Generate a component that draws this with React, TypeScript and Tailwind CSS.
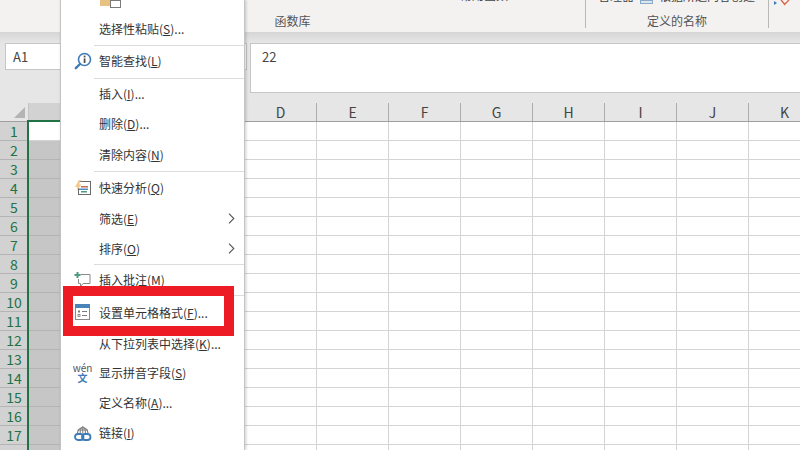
const columns = ['A', 'B', 'C', 'D', 'E', 'F', 'G', 'H', 'I', 'J', 'K'];
const rows = Array.from({ length: 18 }, (_, i) => i + 1);

function SearchIcon() {
  return (
    <svg width="18" height="18" viewBox="0 0 18 18" fill="none">
      <circle cx="10.5" cy="7.5" r="6" stroke="#3f7cb6" strokeWidth="1.6" fill="#fff" />
      <path d="M6 12 L1.8 16.2" stroke="#3f7cb6" strokeWidth="2.4" strokeLinecap="round" />
      <rect x="9.7" y="3.6" width="1.8" height="1.8" fill="#505050" />
      <rect x="9.7" y="6.4" width="1.8" height="4.6" fill="#505050" />
    </svg>
  );
}

function QuickIcon() {
  return (
    <svg width="18" height="18" viewBox="0 0 18 18" fill="none">
      <rect x="4.5" y="2.5" width="12" height="13" fill="#fff" stroke="#6a6a6a" />
      <path d="M5 1 L1 8 H3.5 L2.5 12 L7.5 5.5 H5 L7 1 Z" fill="#f2c98a" />
      <rect x="7" y="7" width="7" height="1.5" fill="#c9694f" />
      <rect x="5" y="9.5" width="9" height="1.5" fill="#4b8fc4" />
      <rect x="7" y="12" width="6" height="1.5" fill="#4f9a84" />
    </svg>
  );
}

function CommentIcon() {
  return (
    <svg width="18" height="18" viewBox="0 0 18 18" fill="none">
      <path d="M6.5 3.5 H16 V12.5 H9 L6.5 15.5 V12.5 H4.5 V8" stroke="#8a8a8a" strokeWidth="1" />
      <path d="M3.5 1 V7 M0.5 4 H6.5" stroke="#4f9a84" strokeWidth="2" />
    </svg>
  );
}

function FormatIcon() {
  return (
    <svg width="16" height="17" viewBox="0 0 16 17" fill="none">
      <rect x="0.5" y="0.5" width="14" height="15" fill="#fff" stroke="#8a8a8a" />
      <rect x="0" y="0" width="15" height="4" fill="#4a83b8" />
      <rect x="3" y="6.5" width="2" height="2" fill="#7b7b7b" />
      <rect x="7" y="7" width="5" height="1" fill="#7b7b7b" />
      <rect x="3" y="10.5" width="2" height="2" fill="none" stroke="#7b7b7b" strokeWidth="0.8" />
      <rect x="7" y="11" width="5" height="1" fill="#7b7b7b" />
    </svg>
  );
}

function LinkIcon() {
  return (
    <svg width="18" height="18" viewBox="0 0 18 18" fill="none">
      <path d="M3.5 9 A5.3 6.3 0 0 1 14 9" stroke="#7b7b7b" strokeWidth="1.2" />
      <path d="M3.5 6 H14 M8.8 2.5 V9 M6.2 9 C6 6 7 4 8.8 2.7 C10.6 4 11.6 6 11.4 9" stroke="#7b7b7b" strokeWidth="1" />
      <rect x="1" y="10" width="8.5" height="6" rx="3" stroke="#3f7cb6" strokeWidth="1.8" fill="#fff" />
      <rect x="8" y="10" width="8.5" height="6" rx="3" stroke="#3f7cb6" strokeWidth="1.8" />
    </svg>
  );
}

function Chevron() {
  return (
    <svg width="7" height="11" viewBox="0 0 7 11" fill="none" className="ml-auto mr-[9px]">
      <path d="M1 0.7 L5.8 5.5 L1 10.3" stroke="#555" strokeWidth="1.1" />
    </svg>
  );
}

function Item({
  label,
  hotkey,
  dots,
  height,
  icon,
  arrow,
}: {
  label: string;
  hotkey: string;
  dots?: boolean;
  height: string;
  icon?: React.ReactNode;
  arrow?: boolean;
}) {
  return (
    <div className={`flex items-center text-[12px] leading-none text-[#333] ${height}`}>
      <div className="flex w-[38px] shrink-0 items-center justify-center pl-[5px]">{icon}</div>
      <span className="whitespace-nowrap">
        {label}(<u>{hotkey}</u>){dots ? '...' : ''}
      </span>
      {arrow && <Chevron />}
    </div>
  );
}

function Separator() {
  return <div className="ml-[33px] h-px bg-[#dcdcdc]" />;
}

function ContextMenu() {
  return (
    <div className="absolute left-[60px] top-0 h-[450px] w-[185px] border-x border-[#c4c4c4] bg-white shadow-[1px_0_3px_rgba(0,0,0,0.2)]">
      <div className="flex h-[13px] items-start pl-[39px]">
        <div className="h-[6px] w-[10px] bg-[#e8c283]" />
        <div className="h-[8px] w-[11px] border border-[#7b7b7b] bg-white" />
      </div>
      <Item label="选择性粘贴" hotkey="S" dots height="h-[31px]" />
      <div className="h-px" />
      <Separator />
      <Item label="智能查找" hotkey="L" height="h-[30px]" icon={<SearchIcon />} />
      <div className="h-[2px]" />
      <Separator />
      <Item label="插入" hotkey="I" dots height="h-[30px]" />
      <Item label="删除" hotkey="D" dots height="h-[30px]" />
      <Item label="清除内容" hotkey="N" height="h-[32px]" />
      <Separator />
      <Item label="快速分析" hotkey="Q" height="h-[32px]" icon={<QuickIcon />} />
      <Item label="筛选" hotkey="E" height="h-[29px]" arrow />
      <Item label="排序" hotkey="O" height="h-[31px]" arrow />
      <Separator />
      <Item label="插入批注" hotkey="M" height="h-[30px]" icon={<CommentIcon />} />
      <Separator />
      <Item label="设置单元格格式" hotkey="F" dots height="h-[33px]" icon={<FormatIcon />} />
      <Item label="从下拉列表中选择" hotkey="K" dots height="h-[29px]" />
      <Item
        label="显示拼音字段"
        hotkey="S"
        height="h-[30px]"
        icon={
          <div className="flex flex-col items-center leading-none">
            <span className="text-[10px] leading-[10px] text-[#555]">wén</span>
            <span className="text-[10px] font-bold leading-[10px] text-[#3f7cb6]">文</span>
          </div>
        }
      />
      <Item label="定义名称" hotkey="A" dots height="h-[30px]" />
      <Item label="链接" hotkey="I" height="h-[30px]" icon={<LinkIcon />} />
    </div>
  );
}

function Ribbon() {
  return (
    <div className="flex h-[32px] bg-[#f3f2f1] text-[12px] text-[#555]">
      <div className="relative h-[28px] w-[586px] border-r border-[#b8b8b8] text-center">
        <div className="h-[14px]" />
        <div className="leading-[14px]">函数库</div>
        <div className="absolute -top-[12px] left-[460px] whitespace-nowrap leading-[14px] text-[#444]">常用函数</div>
      </div>
      <div className="relative h-[28px] w-[183px] border-r border-[#b8b8b8] text-center">
        <div className="h-[14px]" />
        <div className="leading-[14px]">定义的名称</div>
        <div className="absolute -top-[11px] left-[12px] whitespace-nowrap leading-[14px] text-[#444]">管理器</div>
        <div className="absolute left-[54px] top-0 h-[4px] w-[13px] border border-[#8aa9c9] bg-[#dbe6f1]" />
        <div className="absolute -top-[11px] left-[73px] whitespace-nowrap leading-[14px] text-[#444]">根据所选内容创建</div>
      </div>
      <div className="relative">
        <svg width="24" height="6" viewBox="0 0 24 6" className="absolute left-[3px] top-0" fill="none">
          <path d="M2 1 L5 3 L2 5 Z" fill="#3f7cb6" />
          <path d="M9 0 L13 4.5 M17 0 L12 5" stroke="#d9674a" strokeWidth="1.4" />
        </svg>
      </div>
    </div>
  );
}

function FormulaBar() {
  return (
    <div className="flex h-[71px] bg-linear-to-b from-[#d6d6d6] via-[#e6e6e6] via-[15%] to-[#e6e6e6] pt-[11px]">
      <div className="ml-[5px] flex h-[27px] w-[242px] items-center border border-[#c6c6c6] bg-white pl-[7px] text-[13px] text-[#444]">
        A1
      </div>
      <div className="ml-[3px] h-[50px] flex-1 border border-r-0 border-[#c6c6c6] bg-white pl-[11px] pt-[4px] text-[13px] leading-[18px] text-[#444]">
        22
      </div>
    </div>
  );
}

function Sheet() {
  return (
    <div className="relative">
      <div className="flex h-[19px] border-b border-[#9f9f9f] bg-[#e6e6e6]">
        <div className="relative w-[29px] shrink-0 border-r border-[#c4c4c4]">
          <div className="absolute bottom-[3px] right-[3px] h-0 w-0 border-b-[11px] border-l-[11px] border-b-[#b4b4b4] border-l-transparent" />
        </div>
        {columns.map((col, i) => (
          <div
            key={col}
            className={`flex w-[72px] shrink-0 items-center justify-center border-r border-[#acacac] pt-px text-[14px] text-[#444] ${i === 0 ? 'bg-[#d2d2d2]' : ''}`}
          >
            {col}
          </div>
        ))}
      </div>
      {rows.map((row) => (
        <div key={row} className="flex h-[19px]">
          <div className="flex w-[29px] shrink-0 items-center justify-center border-b border-r border-[#b4b4b4] bg-[#d2d2d2] pt-px text-[14px] text-[#217346]">
            {row}
          </div>
          {columns.map((col, i) => (
            <div
              key={col}
              className={`w-[72px] shrink-0 border-b border-r ${
                i === 0
                  ? row === 1
                    ? 'border-[#d4d4d4] bg-white'
                    : 'border-[#b4b4b4] bg-[#c6c6c6]'
                  : i < 3
                    ? 'border-[#d4d4d4] bg-[#c6c6c6]'
                    : 'border-[#d4d4d4] bg-white'
              }`}
            />
          ))}
        </div>
      ))}
      <div className="absolute left-[27px] top-[17px] h-[2px] w-[73px] bg-[#217346]" />
      <div className="absolute bottom-0 left-[27px] top-[17px] w-[2px] bg-[#217346]" />
    </div>
  );
}

export default function App() {
  return (
    <div
      className="relative h-[450px] w-[800px] overflow-hidden bg-white"
      style={{ fontFamily: '"Noto Sans CJK SC", "Liberation Sans", sans-serif' }}
    >
      <Ribbon />
      <FormulaBar />
      <Sheet />
      <ContextMenu />
      <div className="absolute left-[63px] top-[286px] h-[50px] w-[171px] border-[10px] border-[#ed1c24]" />
    </div>
  );
}
